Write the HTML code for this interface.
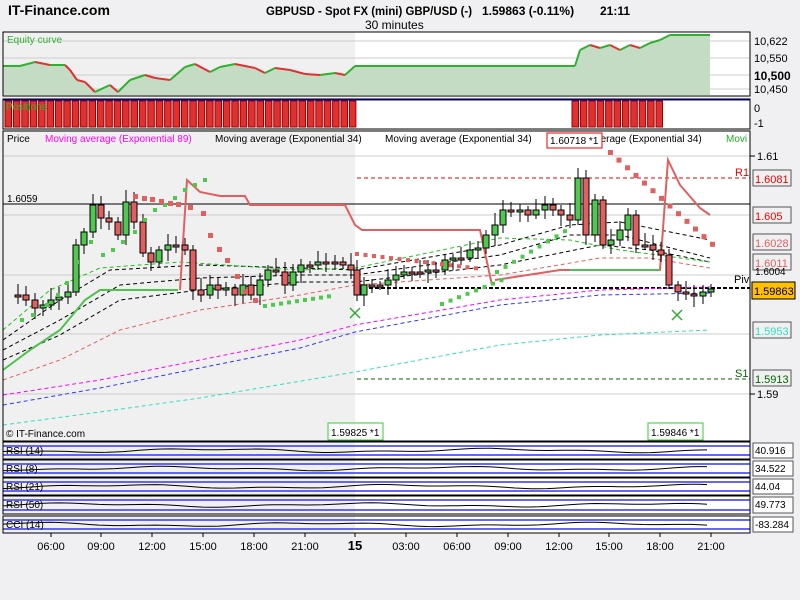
<!DOCTYPE html>
<html><head><meta charset="utf-8"><style>
body{margin:0;width:800px;height:600px;background:#f0f0f2;font-family:"Liberation Sans",sans-serif;overflow:hidden}
svg{display:block}
</style></head><body>
<svg id="s" width="800" height="600" xmlns="http://www.w3.org/2000/svg" font-family="Liberation Sans, sans-serif">
<rect width="800" height="600" fill="#f0f0f2"/>
<text x="8" y="15" font-size="14" font-weight="bold">IT-Finance.com</text>
<text x="266" y="15" font-size="12" font-weight="bold" textLength="206" lengthAdjust="spacingAndGlyphs">GBPUSD - Spot FX (mini) GBP/USD (-)</text>
<text x="482" y="15" font-size="12" font-weight="bold">1.59863 (-0.11%)</text>
<text x="600" y="15" font-size="12" font-weight="bold">21:11</text>
<text x="365" y="29" font-size="12">30 minutes</text>
<g id="g"></g>
</svg>
<script>
var g=document.getElementById('g'),h='';
function R(x,y,w,hh,f,s){h+='<rect x="'+x+'" y="'+y+'" width="'+w+'" height="'+hh+'" fill="'+f+'"'+(s?' stroke="'+s+'"':'')+'/>';}
function L(x1,y1,x2,y2,c,d,w){h+='<line x1="'+x1+'" y1="'+y1+'" x2="'+x2+'" y2="'+y2+'" stroke="'+c+'" stroke-width="'+(w||1)+'"'+(d?' stroke-dasharray="'+d+'"':'')+'/>';}
function P(pts,c,d,w,f){h+='<polyline points="'+pts.map(function(p){return p.join(',')}).join(' ')+'" fill="'+(f||'none')+'" stroke="'+c+'" stroke-width="'+(w||1)+'"'+(d?' stroke-dasharray="'+d+'"':'')+'/>';}
function T(x,y,t,s,c,b,a){h+='<text x="'+x+'" y="'+y+'" font-size="'+s+'" fill="'+(c||'#000')+'"'+(b?' font-weight="bold"':'')+(a?' text-anchor="'+a+'"':'')+'>'+t+'</text>';}
var panels=[[32,96],[99,129],[131,441],[442,459],[460,477],[478,495],[496,514],[516,533]];
panels.forEach(function(p){R(3,p[0],747,p[1]-p[0],'#fff');R(3,p[0],352,p[1]-p[0],'#f0f0f0');});
[41,58,75,89].forEach(function(y){L(3,y,750,y,'#ccc');});
var eq=[[3,66],[20,66],[35,62],[50,65],[65,65],[70,70],[77,80],[85,82],[95,92],[110,85],[118,92],[130,80],[145,75],[155,78],[170,80],[185,67],[195,64],[210,72],[220,67],[235,64],[255,68],[265,73],[275,68],[290,70],[305,74],[320,75],[335,73],[345,75],[355,66],[575,66],[580,50],[590,45],[600,48],[610,45],[620,50],[630,45],[640,48],[650,43],[660,40],[670,35],[710,35]];
P(eq.concat([[710,95],[3,95]]),'none','',0,'#c4dcc4');
for(var i=1;i<eq.length;i++){L(eq[i-1][0],eq[i-1][1],eq[i][0],eq[i][1],eq[i][1]>eq[i-1][1]?'#e03030':'#30b030','',2);}
T(7,43,'Equity curve',10,'#30b030');
for(var x=5;x<352;x+=8.4)R(x,101,6.5,26,'#e03030','#900');
for(var x=572;x<656;x+=8.4)R(x,101,6.5,26,'#e03030','#900');
L(3,100,750,100,'#00c','',1);
T(6,110,'Positions',10,'#30b030');
[156,215,275,334,394].forEach(function(y){L(3,y,750,y,'#ccc');});
L(3,204,750,204,'#000');T(7,202,'1.6059',10);
L(357,178,750,178,'#e00','4,3');T(735,176,'R1',11,'#e00');
L(357,379,750,379,'#060','4,3');T(735,377,'S1',11,'#060');
L(357,288,750,288,'#000','4,2',2);T(734,283,'Piv',11);
function curve(a,c,d,w){P(a,c,d,w);}
curve([[3,425],[100,412],[200,398],[355,372],[500,345],[600,335],[710,330]],'#2ee0c0','4,3');
curve([[3,395],[100,380],[200,360],[300,340],[355,325],[500,300],[600,290],[710,287]],'#f0f','4,3');
curve([[3,405],[100,388],[200,368],[300,348],[355,332],[500,305],[600,295],[710,293]],'#33f','4,3');
curve([[3,380],[60,360],[120,330],[200,310],[300,295],[355,285],[500,275],[600,258],[650,258],[710,268]],'#e06060','4,3');
curve([[3,360],[60,335],[120,300],[200,290],[300,282],[355,282],[500,265],[600,245],[650,250],[710,262]],'#000','4,3');
curve([[3,350],[60,320],[120,285],[200,278],[300,275],[355,275],[500,255],[570,235],[620,235],[710,258]],'#000','4,3');
curve([[3,340],[60,300],[110,270],[200,265],[300,268],[355,270],[500,245],[570,225],[620,222],[710,240]],'#000','4,3');
curve([[3,330],[50,290],[100,268],[180,262],[300,270],[355,268],[500,238],[570,240],[620,250],[710,262]],'#20c020','4,3');
P([[3,370],[30,350],[60,330],[85,300],[100,290],[178,290]],'#50c050','',2);
P([[180,290],[187,180],[200,192],[220,196],[245,196],[250,205],[345,205],[355,225],[362,230],[480,230],[492,285]],'#e06060','',2);
P([[495,280],[560,270],[570,270],[660,270],[668,160],[680,185],[700,208],[710,215]],'#e06060','',2);
P([[570,270],[660,270]],'#50c050','',2);
var k=[[10,295],[18,295],[26,300],[35,308],[43,305],[51,300],[59,297],[68,292],[76,245],[84,232],[93,205],[101,218],[109,222],[118,235],[126,202],[134,222],[143,253],[151,262],[159,250],[168,245],[176,245],[185,250],[193,290],[201,295],[210,285],[218,290],[226,288],[235,295],[243,285],[251,295],[260,280],[268,270],[276,272],[285,285],[293,272],[301,265],[310,265],[318,262],[326,262],[335,262],[343,265],[351,270],[357,295],[364,285],[372,285],[380,285],[388,280],[396,275],[404,272],[412,272],[420,272],[428,270],[436,270],[445,260],[453,258],[461,258],[470,250],[478,248],[486,235],[495,225],[503,210],[511,212],[520,210],[528,215],[536,210],[545,205],[553,210],[561,215],[570,220],[578,178],[586,235],[595,200],[603,245],[611,240],[620,230],[628,215],[636,245],[645,245],[653,250],[661,255],[669,285],[678,292],[686,294],[694,296],[703,292],[711,289]];
for(var i=1;i<k.length;i++){var x=k[i][0],o=k[i-1][1],c=k[i][1],t=Math.min(o,c)-4-(i*7%9),b=Math.max(o,c)+4+(i*5%8);
L(x,t,x,b,'#000');var col=c<o?'#50c850':'#e06060';R(x-3,Math.min(o,c),6,Math.max(2,Math.abs(c-o)),col,'#000');}
[[22,320],[33,315],[47,305],[58,295],[67,283],[77,262],[91,242],[103,255],[113,250],[123,242],[135,232],[145,220],[155,210],[165,205],[175,198],[185,190],[195,185],[205,180]].forEach(function(d){R(d[0]-2,d[1]-2,4,4,'#50c850');});
[[135,196],[144,198],[152,199],[161,201],[170,203],[178,204],[190,207],[203,213],[210,235],[219,249],[227,260],[237,276],[245,291],[255,300]].forEach(function(d){R(d[0]-2,d[1]-2,5,5,'#e06060');});
for(var x=263;x<330;x+=8)R(x,304-(x-263)*0.15,4,4,'#50c850');
for(var x=355;x<480;x+=8.5)R(x,252+(x-355)*0.12,4,4,'#e06060');
for(var x=440;x<500;x+=8.5)R(x,302-(x-440)*0.4,4,4,'#50c850');
for(var x=495;x<565;x+=8.5)R(x,270-(x-495)*0.6,4,4,'#50c850');
for(var x=608;x<712;x+=8.5)R(x,150+(x-608)*0.9,5,5,'#e06060');
L(350,308,360,318,'#3a3','',1.5);L(360,308,350,318,'#3a3','',1.5);
L(672,310,682,320,'#3a3','',1.5);L(682,310,672,320,'#3a3','',1.5);
T(7,142,'Price',10);T(45,142,'Moving average (Exponential 89)',10,'#f0f');T(215,142,'Moving average (Exponential 34)',10);T(385,142,'Moving average (Exponential 34)',10);T(555,142,'Moving average (Exponential 34)',10);T(726,142,'Movi',10,'#2a2');
R(547,133,55,15,'#fff','#e00');T(550,144,'1.60718 *1',10);
T(6,437,'© IT-Finance.com',10);
R(328,423,55,17,'#fff','#3c3');T(331,436,'1.59825 *1',10);
R(648,423,55,17,'#fff','#3c3');T(651,436,'1.59846 *1',10);
L(750,131,750,441,'#000');
[[156,'1.61'],[394,'1.59']].forEach(function(a){L(750,a[0],755,a[0],'#000');T(757,a[0]+4,a[1],11);});
[[178,'1.6081','#e00'],[215,'1.605','#e00'],[242,'1.6028','#e06060'],[262,'1.6011','#e06060'],[330,'1.5953','#2ee0c0'],[378,'1.5913','#060']].forEach(function(a){R(753,a[0]-8,38,16,'#f0f0f0','#555');T(755,a[0]+5,a[1],11,a[2]);});
T(755,275,'1.6004',10);
R(752,282,43,17,'#ffc000','#000');T(754,295,'1.59863',11);
L(750,32,750,96,'#000');
T(754,45,'10,622',11);T(754,62,'10,550',11);T(754,80,'10,500',12,'#000',1);T(754,93,'10,450',11);
T(754,112,'0',11);T(754,127,'-1',11);
var osc=[[442,459,'RSI (14)','40.916'],[460,477,'RSI (8)','34.522'],[478,495,'RSI (21)','44.04'],[496,514,'RSI (50)','49.773'],[516,533,'CCI (14)','-83.284']];
osc.forEach(function(o,j){var a=o[0]+4,b=o[1]-4;L(3,a,750,a,'#33f','',1.5);L(3,b,750,b,'#33f','',1.5);
var m=(o[0]+o[1])/2,pts=[];for(var x=3;x<=710;x+=8){pts.push([x,(m+Math.sin(x/45+j)*1.5+Math.cos(x/17)*0.8).toFixed(1)]);}P(pts,'#000');
T(6,o[0]+12,o[2],10);R(753,o[0]+1,40,o[1]-o[0]-2,'#fff','#555');T(755,o[0]+12,o[3],10);L(750,o[0],750,o[1],'#000');});
panels.forEach(function(p){R(3,p[0],747,p[1]-p[0],'none','#000');});
[[51,'06:00'],[101,'09:00'],[152,'12:00'],[203,'15:00'],[254,'18:00'],[305,'21:00'],[355,'15'],[406,'03:00'],[457,'06:00'],[508,'09:00'],[559,'12:00'],[609,'15:00'],[660,'18:00'],[711,'21:00']].forEach(function(a){L(a[0],533,a[0],537,'#000');T(a[0],550,a[1],a[1]=='15'?13:11,'#000',a[1]=='15',"middle");});
g.innerHTML=h;
</script>
</body></html>
